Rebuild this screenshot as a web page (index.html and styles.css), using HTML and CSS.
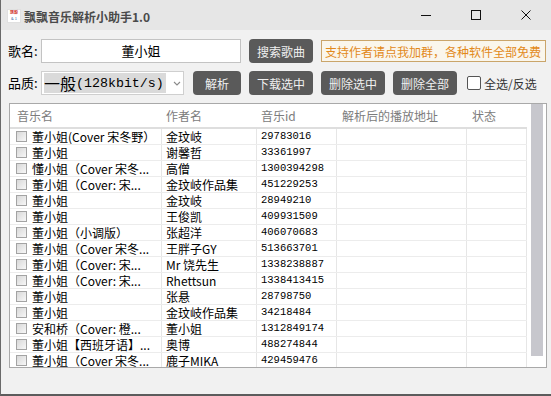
FILE: index.html
```html
<!DOCTYPE html>
<html lang="zh">
<head>
<meta charset="utf-8">
<title>飘飘音乐解析小助手1.0</title>
<link rel="stylesheet" href="styles.css">
</head>
<body>
<div class="window">
  <div class="titlebar">
    <div class="app-icon"><span class="ai-top">飘影</span><span class="ai-bot">&amp; 1</span></div>
    <div class="title">飘飘音乐解析小助手1.0</div>
    <div class="controls">
      <div class="ctl"><svg width="12" height="12" viewBox="0 0 12 12"><path d="M1 6.5h10" stroke="#111" stroke-width="1"/></svg></div>
      <div class="ctl"><svg width="12" height="12" viewBox="0 0 12 12"><rect x="1.5" y="1.5" width="9" height="9" fill="none" stroke="#111" stroke-width="1"/></svg></div>
      <div class="ctl"><svg width="12" height="12" viewBox="0 0 12 12"><path d="M1.5 1.5l9 9M10.5 1.5l-9 9" stroke="#111" stroke-width="1"/></svg></div>
    </div>
  </div>
  <div class="content">
    <div class="row r1">
      <div class="label">歌名:</div>
      <div class="song-input">董小姐</div>
      <div class="btn btn-wide gap8">搜索歌曲</div>
      <div class="promo">支持作者请点我加群，各种软件全部免费</div>
    </div>
    <div class="row r2">
      <div class="label">品质:</div>
      <div class="select">
        <span class="sel-text"><span class="q-cn">一般</span><span class="q-en">(128kbit/s)</span></span>
        <svg class="chev" width="8" height="5" viewBox="0 0 8 5"><path d="M1 1l3 3 3-3" fill="none" stroke="#8a8a8a" stroke-width="1.1"/></svg>
      </div>
      <div class="btn btn-narrow gap9">解析</div>
      <div class="btn btn-wide gap8">下载选中</div>
      <div class="btn btn-wide gap8">删除选中</div>
      <div class="btn btn-wide gap8">删除全部</div>
      <label class="all-check"><span class="big-box"></span>全选/反选</label>
    </div>
    <div class="table">
      <div class="grid">
        <div class="thead">
          <div class="th c1">音乐名</div>
          <div class="th c2">作者名</div>
          <div class="th c3">音乐id</div>
          <div class="th c4">解析后的播放地址</div>
          <div class="th c5">状态</div>
        </div>
        <div class="tbody">
          <div class="tr"><div class="td c1"><span class="cb"></span>董小姐(Cover 宋冬野）</div><div class="td c2">金玟岐</div><div class="td c3 id">29783016</div><div class="td c4"></div><div class="td c5"></div></div>
          <div class="tr"><div class="td c1"><span class="cb"></span>董小姐</div><div class="td c2">谢馨哲</div><div class="td c3 id">33361997</div><div class="td c4"></div><div class="td c5"></div></div>
          <div class="tr"><div class="td c1"><span class="cb"></span>懂小姐（Cover 宋冬...</div><div class="td c2">高僧</div><div class="td c3 id">1300394298</div><div class="td c4"></div><div class="td c5"></div></div>
          <div class="tr"><div class="td c1"><span class="cb"></span>董小姐（Cover: 宋...</div><div class="td c2">金玟岐作品集</div><div class="td c3 id">451229253</div><div class="td c4"></div><div class="td c5"></div></div>
          <div class="tr"><div class="td c1"><span class="cb"></span>董小姐</div><div class="td c2">金玟岐</div><div class="td c3 id">28949210</div><div class="td c4"></div><div class="td c5"></div></div>
          <div class="tr"><div class="td c1"><span class="cb"></span>董小姐</div><div class="td c2">王俊凯</div><div class="td c3 id">409931509</div><div class="td c4"></div><div class="td c5"></div></div>
          <div class="tr"><div class="td c1"><span class="cb"></span>董小姐（小调版）</div><div class="td c2">张超洋</div><div class="td c3 id">406070683</div><div class="td c4"></div><div class="td c5"></div></div>
          <div class="tr"><div class="td c1"><span class="cb"></span>董小姐（Cover 宋冬...</div><div class="td c2">王胖子GY</div><div class="td c3 id">513663701</div><div class="td c4"></div><div class="td c5"></div></div>
          <div class="tr"><div class="td c1"><span class="cb"></span>董小姐（Cover: 宋...</div><div class="td c2">Mr 饶先生</div><div class="td c3 id">1338238887</div><div class="td c4"></div><div class="td c5"></div></div>
          <div class="tr"><div class="td c1"><span class="cb"></span>董小姐（Cover: 宋...</div><div class="td c2">Rhettsun</div><div class="td c3 id">1338413415</div><div class="td c4"></div><div class="td c5"></div></div>
          <div class="tr"><div class="td c1"><span class="cb"></span>董小姐</div><div class="td c2">张悬</div><div class="td c3 id">28798750</div><div class="td c4"></div><div class="td c5"></div></div>
          <div class="tr"><div class="td c1"><span class="cb"></span>董小姐</div><div class="td c2">金玟岐作品集</div><div class="td c3 id">34218484</div><div class="td c4"></div><div class="td c5"></div></div>
          <div class="tr"><div class="td c1"><span class="cb"></span>安和桥（Cover: 橙...</div><div class="td c2">董小姐</div><div class="td c3 id">1312849174</div><div class="td c4"></div><div class="td c5"></div></div>
          <div class="tr"><div class="td c1"><span class="cb"></span>董小姐【西班牙语】...</div><div class="td c2">奥博</div><div class="td c3 id">488274844</div><div class="td c4"></div><div class="td c5"></div></div>
          <div class="tr"><div class="td c1"><span class="cb"></span>董小姐（Cover 宋冬...</div><div class="td c2">鹿子MIKA</div><div class="td c3 id">429459476</div><div class="td c4"></div><div class="td c5"></div></div>
        </div>
      </div>
      <div class="scrollbar"></div>
    </div>
  </div>
</div>
</body>
</html>
```
FILE: styles.css
```css
* { box-sizing: border-box; }
html, body { margin: 0; padding: 0; }
body {
  width: 551px;
  height: 396px;
  overflow: hidden;
  font-family: "Noto Sans CJK SC", sans-serif;
  background: #f1f1f1;
}
.window {
  width: 551px;
  height: 396px;
  border-left: 1px solid #6a6a6a;
  border-bottom: 2px solid #5c5c5c;
  display: flex;
  flex-direction: column;
  background: #f1f1f1;
}
.titlebar {
  height: 30px;
  flex: none;
  background: #e6e6e6;
  display: flex;
  align-items: center;
  padding-left: 6px;
}
.app-icon {
  width: 14px;
  height: 14px;
  background: #fff;
  border: 1px solid #e0e0e0;
  display: flex;
  flex-direction: column;
  align-items: center;
  justify-content: center;
  line-height: 5px;
  margin-right: 3px;
  margin-top: 1px;
}
.ai-top { font-size: 4px; color: #d0342c; font-weight: bold; }
.ai-bot { font-size: 4px; color: #3a5fa0; margin-top: 1px; }
.title {
  flex: 1;
  font-size: 12px;
  font-weight: bold;
  color: #4a4a4a;
  padding-top: 2px;
}
.controls { display: flex; align-self: stretch; }
.ctl {
  width: 50px;
  display: flex;
  align-items: center;
  justify-content: center;
}
.ctl svg { display: block; }

.content { padding: 9px 0 0 7px; flex: 1; }
.row { display: flex; align-items: center; height: 24px; }
.r2 { margin-top: 8px; }
.label { width: 33px; font-size: 13px; color: #000; line-height: 24px; }
.song-input {
  width: 200px;
  height: 24px;
  background: #fff;
  border: 1px solid #c3c3c3;
  font-size: 13px;
  color: #000;
  text-align: center;
  line-height: 22px;
}
.btn {
  height: 24px;
  border-radius: 4px;
  background: #5a5a5a;
  color: #f0f0f0;
  font-size: 12px;
  display: flex;
  align-items: center;
  justify-content: center;
}
.btn-wide { width: 64px; }
.btn-narrow { width: 48px; }
.gap8 { margin-left: 8px; }
.gap9 { margin-left: 9px; }
.promo {
  margin-left: 8px;
  width: 225px;
  height: 22px;
  border: 1px solid #caa56a;
  background: #faf6ec;
  color: #e2891a;
  font-size: 12px;
  display: flex;
  align-items: center;
  padding-left: 3px;
  white-space: nowrap;
}
.select {
  width: 143px;
  height: 24px;
  background: #fff;
  border: 1px solid #cfcfcf;
  display: flex;
  align-items: center;
  padding: 1px;
}
.sel-text {
  width: 122px;
  height: 20px;
  background: #dadada;
  display: flex;
  align-items: center;
  white-space: nowrap;
  color: #000;
  margin-left: 1px;
}
.q-cn { font-size: 16px; }
.q-en { font-family: "Liberation Mono", monospace; font-size: 13.3px; }
.chev { margin-left: 7px; }
.all-check {
  margin-left: 10px;
  display: flex;
  align-items: center;
  font-size: 12px;
  color: #333;
}
.big-box {
  width: 14px;
  height: 14px;
  border: 1px solid #555;
  border-radius: 2px;
  background: #fff;
  margin-right: 3px;
}

.table {
  margin-top: 8px;
  margin-left: 1px;
  width: 538px;
  height: 265px;
  border: 1px solid #a9a9a9;
  background: #fff;
  display: flex;
  overflow: hidden;
}
.grid { width: 517px; flex: none; }
.thead {
  display: flex;
  height: 25px;
  border-bottom: 2px solid #dedede;
}
.th {
  font-size: 12px;
  color: #7c7c7c;
  line-height: 23px;
}
.c1 { width: 152px; padding-left: 7px; }
.c2 { width: 95px; padding-left: 4px; }
.c3 { width: 80px; padding-left: 4px; }
.c4 { width: 130px; padding-left: 5px; }
.c5 { width: 60px; padding-left: 5px; }
.tr {
  display: flex;
  height: 16px;
  border-bottom: 1px solid #ececec;
}
.td {
  font-size: 12px;
  color: #000;
  line-height: 15px;
  white-space: nowrap;
  overflow: hidden;
  border-right: 1px solid #e6e6e6;
  display: flex;
  align-items: center;
}
.td.c1 { padding-left: 6px; }
.td.id { font-family: "Liberation Mono", monospace; font-size: 10.5px; }
.cb {
  width: 11px;
  height: 11px;
  flex: none;
  border: 1px solid #a3a3a3;
  background: linear-gradient(135deg, #d8d8d8, #f7f7f7);
  margin-right: 5px;
}
.scrollbar {
  margin-left: 4px;
  width: 12px;
  height: 252px;
  background: #c7c7cd;
}
```
